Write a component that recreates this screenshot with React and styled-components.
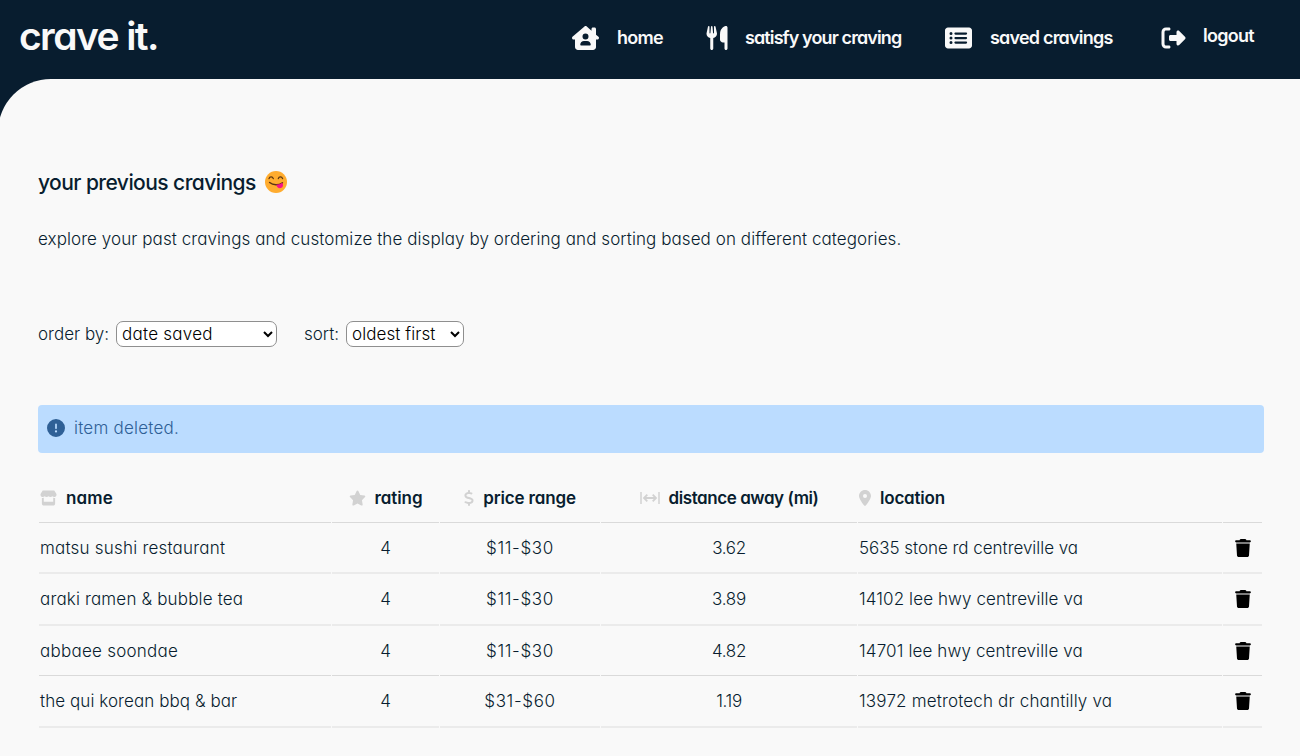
import React from "react";
import styled, { createGlobalStyle } from "styled-components";
import {
  FaHouseChimneyUser,
  FaUtensils,
  FaRectangleList,
  FaRightFromBracket,
  FaStar,
  FaStore,
  FaDollarSign,
  FaLocationDot,
  FaTrash,
  FaCircleExclamation,
} from "react-icons/fa6";

const GlobalStyle = createGlobalStyle`
  *, *::before, *::after { box-sizing: border-box; }
  body {
    margin: 0;
    background: #081d2f;
    color: #081d2f;
    font-family: Inter, "Liberation Sans", sans-serif;
    font-feature-settings: "cv11";
    font-size: 17px;
    font-weight: 300;
    overflow: hidden;
  }
`;

const Header = styled.header`
  display: flex;
  justify-content: space-between;
  height: 79px;
  padding: 0 45px 0 19px;
  background: #081d2f;
  color: #f9f9f9;
`;

const Logo = styled.h1`
  margin: 0;
  padding-top: 12px;
  font-size: 39px;
  line-height: 48px;
  font-weight: 600;
  letter-spacing: -1.6px;
  white-space: nowrap;
`;

const Nav = styled.nav`
  display: flex;
  gap: 43px;
  height: 75px;
`;

const NavItem = styled.a`
  display: flex;
  align-items: center;
  gap: ${(p) => p.$gap || 18}px;
  margin-left: ${(p) => p.$before || 0}px;
  font-size: 18px;
  font-weight: 600;
  letter-spacing: ${(p) => p.$spacing}px;
  white-space: nowrap;
`;

const NavIcon = styled.span`
  display: flex;
  justify-content: center;
  flex: none;
  width: ${(p) => p.$width}px;
  svg { width: ${(p) => p.$width}px; height: 24px; }
`;

const NavLabel = styled.span`
  width: ${(p) => p.$width}px;
  padding-bottom: ${(p) => p.$lift || 0}px;
`;

const Page = styled.main`
  min-height: 677px;
  margin-left: -2px;
  padding: 88px 36px 0 40px;
  border-top-left-radius: 53px;
  background: #f9f9f9;
`;

const Heading = styled.h2`
  display: flex;
  align-items: center;
  gap: 9px;
  margin: 0;
  height: 30px;
  font-size: 21px;
  font-weight: 500;
  letter-spacing: -0.56px;
  svg { width: 22px; height: 22px; }
`;

const Intro = styled.p`
  margin: 30px 0 0;
  line-height: 24px;
  letter-spacing: 0.074px;
  white-space: nowrap;
`;

const Controls = styled.div`
  display: flex;
  gap: 27px;
  margin-top: 70px;
`;

const Control = styled.label`
  display: flex;
  align-items: center;
  gap: 7px;
  height: 26px;
`;

const ControlLabel = styled.span`
  width: ${(p) => p.$width}px;
  white-space: nowrap;
`;

const Select = styled.select`
  width: ${(p) => p.$width}px;
  height: 26px;
  padding: 0 1px;
  border: 1px solid #8f8f8f;
  border-radius: 7px;
  background: #fff;
  color: #000;
  font: inherit;
  font-feature-settings: "cv11";
  letter-spacing: ${(p) => p.$spacing}px;
`;

const Alert = styled.div`
  display: flex;
  align-items: center;
  gap: 9px;
  height: 48px;
  margin-top: 58px;
  padding: 0 9px 2px;
  border-radius: 4px;
  background: #bbdcff;
  color: #2f6096;
  letter-spacing: 0.22px;
  svg { font-size: 18px; }
`;

const Table = styled.div`
  margin: 20px 0 0 1px;
`;

const Row = styled.div`
  display: grid;
  grid-template-columns: 292px 107px 160px 256px 364px 39px;
  column-gap: 1px;
  height: ${(p) => p.$height}px;
`;

const Cell = styled.div`
  display: flex;
  align-items: center;
  justify-content: ${(p) => (p.$center ? "center" : "flex-start")};
  padding-left: ${(p) => (p.$center ? 0 : 1)}px;
  border-bottom: ${(p) => (p.$soft ? "2px solid #ebebeb" : "1px solid #dadada")};
  letter-spacing: ${(p) => p.$spacing || 0}px;
  white-space: nowrap;
`;

const HeadCell = styled(Cell)`
  gap: 9px;
  padding-left: ${(p) => p.$indent || 0}px;
  font-weight: 600;
  svg { height: 16px; flex: none; color: #d2d2d2; }
`;

const SlimIcon = styled.span`
  display: flex;
  svg { width: ${(p) => p.$width}px; }
`;

const DeleteButton = styled.button`
  display: flex;
  padding: 0;
  border: 0;
  background: none;
  color: #000;
  svg { width: 16px; height: 18px; }
`;

const YumFace = () => (
  <svg viewBox="0 0 22 22" aria-hidden="true">
    <circle cx="11" cy="11" r="11" fill="#ffac2f" />
    <g fill="none" stroke="#5b3412" strokeLinecap="round">
      <path d="M4 7.6C4.7 5.4 7.5 5.4 8.3 7.6M13.3 7.6c.7-2.2 3.5-2.2 4.3 0" strokeWidth="1.3" />
      <path d="M4.6 11.5c3.6 3 8.8 3.2 12.8.3" strokeWidth="1.5" />
    </g>
    <path d="M11.3 13.700c2.100 0 4.200-.6 6-1.900 1.300 2.100.8 4.700-1.300 5.300-2.600.7-4.100-1-4.700-3.400z" fill="#f7128b" />
  </svg>
);

const WidthIcon = () => (
  <svg width="20" height="16" viewBox="0 0 20 16" fill="none" stroke="currentColor" aria-hidden="true">
    <path d="M1 2v12M19 2v12" strokeWidth="1.5" />
    <path d="M4 8h12M7.300 4.700 4 8l3.300 3.300M12.700 4.700 16 8l-3.300 3.300" strokeWidth="1.800" />
  </svg>
);

const rows = [
  { name: "matsu sushi restaurant", ns: 0.21, price: "$11-$30", miles: "3.62", place: "5635 stone rd centreville va", ps: -0.03, height: 51, soft: true },
  { name: "araki ramen & bubble tea", ns: 0.16, price: "$11-$30", miles: "3.89", place: "14102 lee hwy centreville va", ps: 0.1, height: 52, soft: true },
  { name: "abbaee soondae", ns: 0.25, price: "$11-$30", miles: "4.82", place: "14701 lee hwy centreville va", ps: 0.13, height: 50, soft: false },
  { name: "the qui korean bbq & bar", ns: 0.07, price: "$31-$60", miles: "1.19", place: "13972 metrotech dr chantilly va", ps: 0.17, height: 52, soft: true },
];

export default function App() {
  return (
    <>
      <GlobalStyle />
      <Header>
        <Logo>crave it.</Logo>
        <Nav>
          <NavItem $spacing={-0.75}>
            <NavIcon $width={27}><FaHouseChimneyUser /></NavIcon>
            <NavLabel $width={46}>home</NavLabel>
          </NavItem>
          <NavItem $spacing={-0.89} $gap={17}>
            <NavIcon $width={22}><FaUtensils /></NavIcon>
            <NavLabel $width={157}>satisfy your craving</NavLabel>
          </NavItem>
          <NavItem $spacing={-0.8}>
            <NavIcon $width={27}><FaRectangleList /></NavIcon>
            <NavLabel $width={123}>saved cravings</NavLabel>
          </NavItem>
          <NavItem $spacing={-0.72} $before={5} $gap={17}>
            <NavIcon $width={25}><FaRightFromBracket /></NavIcon>
            <NavLabel $width={52} $lift={4}>logout</NavLabel>
          </NavItem>
        </Nav>
      </Header>
      <Page>
        <Heading>your previous cravings <YumFace /></Heading>
        <Intro>
          explore your past cravings and customize the display by ordering and sorting based on different categories.
        </Intro>
        <Controls>
          <Control>
            <ControlLabel $width={71}>order by:</ControlLabel>
            <Select $width={161} $spacing={0.25} defaultValue="date">
              <option value="date">date saved</option>
            </Select>
          </Control>
          <Control>
            <ControlLabel $width={35}>sort:</ControlLabel>
            <Select $width={118} $spacing={0.08} defaultValue="oldest">
              <option value="oldest">oldest first</option>
            </Select>
          </Control>
        </Controls>
        <Alert><FaCircleExclamation />item deleted.</Alert>
        <Table>
          <Row $height={50}>
            <HeadCell $indent={1} $spacing={0.15}><FaStore />name</HeadCell>
            <HeadCell $center $spacing={-0.1}><FaStar />rating</HeadCell>
            <HeadCell $center $spacing={-0.15}><SlimIcon $width={10}><FaDollarSign /></SlimIcon>price range</HeadCell>
            <HeadCell $center $spacing={-0.43}><WidthIcon />distance away (mi)</HeadCell>
            <HeadCell $indent={1} $spacing={-0.2}><SlimIcon $width={12}><FaLocationDot /></SlimIcon>location</HeadCell>
            <HeadCell />
          </Row>
          {rows.map((r) => (
            <Row key={r.name} $height={r.height}>
              <Cell $soft={r.soft} $spacing={r.ns}>{r.name}</Cell>
              <Cell $soft={r.soft} $center>4</Cell>
              <Cell $soft={r.soft} $center $spacing={0.66}>{r.price}</Cell>
              <Cell $soft={r.soft} $center $spacing={-0.3}>{r.miles}</Cell>
              <Cell $soft={r.soft} $spacing={r.ps}>{r.place}</Cell>
              <Cell $soft={r.soft} $center>
                <DeleteButton aria-label="delete"><FaTrash /></DeleteButton>
              </Cell>
            </Row>
          ))}
        </Table>
      </Page>
    </>
  );
}
